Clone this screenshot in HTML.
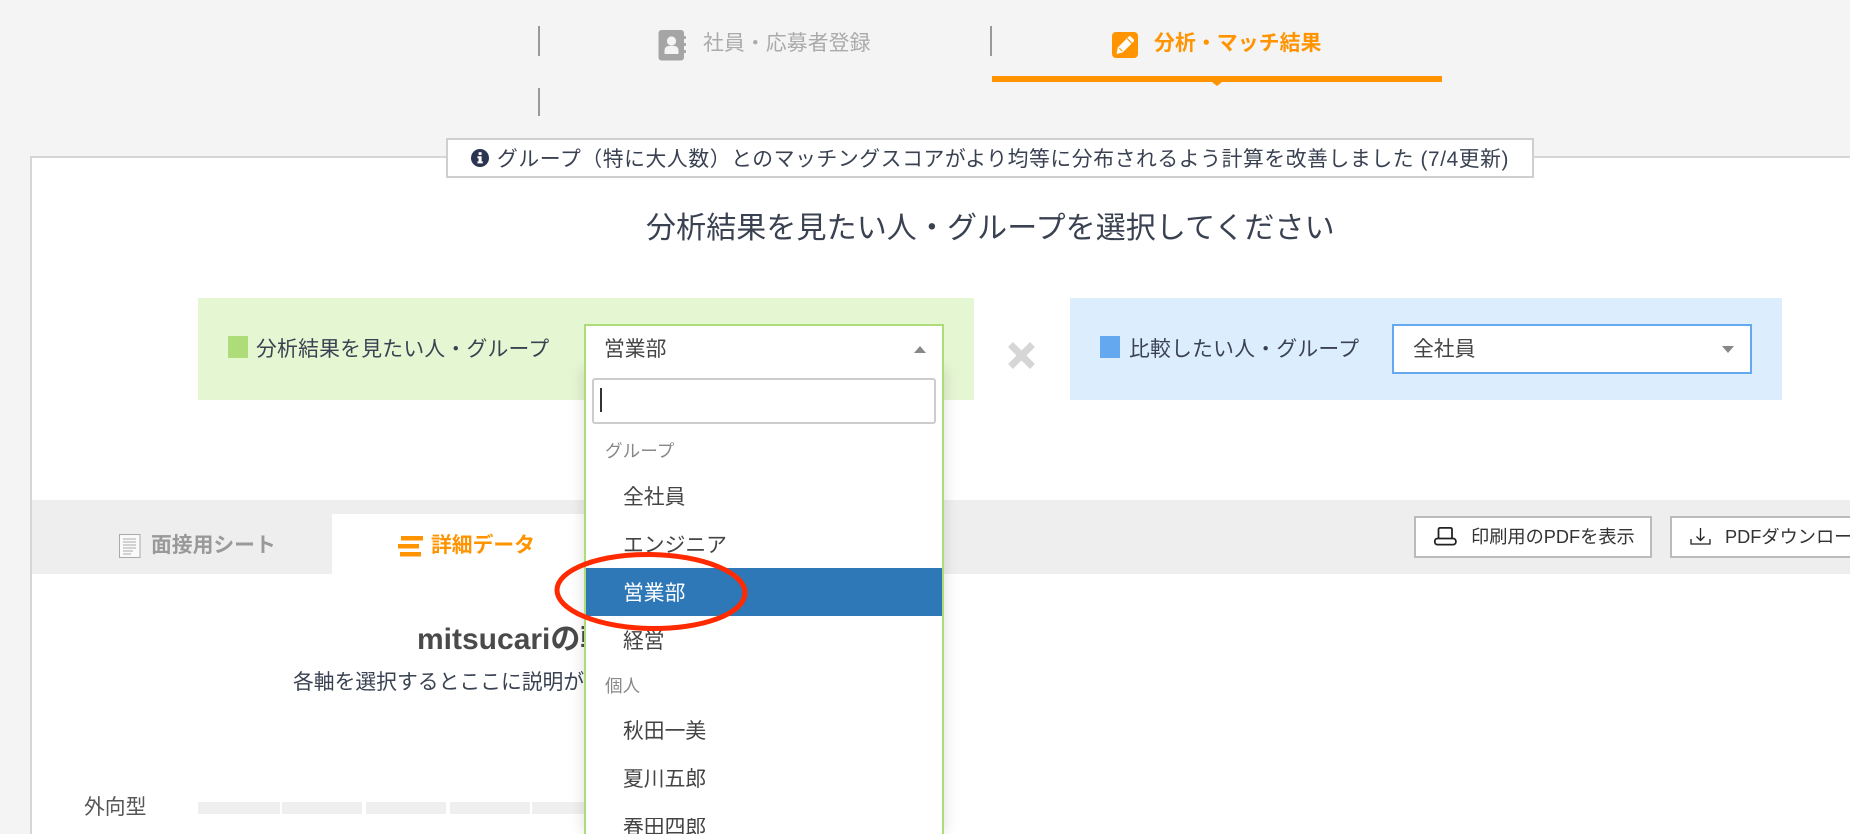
<!DOCTYPE html>
<html lang="ja">
<head>
<meta charset="utf-8">
<title>分析・マッチ結果</title>
<style>
html,body{margin:0;padding:0;width:1850px;height:834px;overflow:hidden;background:#f4f4f4;}
#w{position:absolute;left:0;top:0;width:1850px;height:834px;overflow:hidden;background:#f4f4f4;
font-family:"Liberation Sans","Noto Sans CJK JP",sans-serif;color:#3a4252;}
.a{position:absolute;box-sizing:border-box;}
.t{position:absolute;white-space:nowrap;line-height:1;font-size:20.8px;}
svg{position:absolute;overflow:visible;}
</style>
</head>
<body>
<div id="w">
<!-- top nav -->
<div class="a" style="left:538px;top:26px;width:2px;height:30px;background:#999"></div>
<div class="a" style="left:990px;top:26px;width:2px;height:30px;background:#999"></div>
<div class="a" style="left:538px;top:88px;width:2px;height:28px;background:#999"></div>
<div class="a" style="left:992px;top:76px;width:450px;height:6px;background:#ff9400"></div>
<svg style="left:1212px;top:82px" width="10" height="4"><path d="M0 0H10L5 4Z" fill="#ff9400"/></svg>

<svg style="left:658px;top:30px" width="30" height="31" viewBox="0 0 30 31">
<rect x="0.5" y="0" width="25.5" height="30.5" rx="3" fill="#a5a5a5"/>
<rect x="25.5" y="6" width="2.5" height="3" rx="1" fill="#a5a5a5"/>
<rect x="25.5" y="13" width="2.5" height="3" rx="1" fill="#a5a5a5"/>
<rect x="25.5" y="20" width="2.5" height="3" rx="1" fill="#a5a5a5"/>
<circle cx="13.5" cy="11" r="4.6" fill="#f4f4f4"/>
<path d="M6.5 24V20.5C6.5 17.5 9 16 10.5 16H16.5C18.5 16 20.5 17.5 20.5 20.5V24Z" fill="#f4f4f4"/>
</svg>
<div class="t" style="left:703px;top:34px;color:#aaa;letter-spacing:.15px">社員・応募者登録</div>

<svg style="left:1112px;top:32px" width="26" height="26" viewBox="0 0 26 26">
<rect width="26" height="26" rx="4" fill="#ff9400"/>
<path d="M4.5 22L5.8 15.5L16.5 4.8C17.3 4 18.3 4 19 4.7L21.5 7.2C22.2 7.9 22.2 8.9 21.4 9.7L10.7 20.4Z" fill="#fff"/>
<path d="M15.2 6.6L19.8 11.2" stroke="#ff9400" stroke-width="1.2"/>
<path d="M7.2 16L10.3 19.1" stroke="#ff9400" stroke-width="1"/>
</svg>
<div class="t" style="left:1154px;top:34px;color:#ff9400;font-weight:700;letter-spacing:.15px">分析・マッチ結果</div>

<!-- main panel -->
<div class="a" style="left:30px;top:156px;width:1820px;height:678px;background:#fff;border:2px solid #d6d6d6;border-right:0;border-bottom:0"></div>

<!-- notice -->
<div class="a" style="left:446px;top:138px;width:1088px;height:40px;background:#fff;border:2px solid #cfcfcf"></div>
<svg style="left:471px;top:149px" width="18" height="18" viewBox="0 0 18 18">
<circle cx="9" cy="9" r="9" fill="#2b3450"/>
<rect x="7.6" y="3.2" width="3" height="2.8" fill="#fff"/>
<path d="M6.4 7.2H10.6V12.4H11.8V14.4H6.4V12.4H7.6V9.2H6.4Z" fill="#fff"/>
</svg>
<div class="t" style="left:497px;top:150px;letter-spacing:.6px">グループ（特に大人数）とのマッチングスコアがより均等に分布されるよう計算を改善しました (7/4更新)</div>

<div class="t" style="left:646px;top:214px;font-size:30px;letter-spacing:.1px">分析結果を見たい人・グループを選択してください</div>

<!-- green area -->
<div class="a" style="left:198px;top:298px;width:776px;height:102px;background:#e5f6d3"></div>
<div class="a" style="left:228px;top:336px;width:20px;height:22px;background:#addc78"></div>
<div class="t" style="left:256px;top:340px;letter-spacing:.25px">分析結果を見たい人・グループ</div>

<!-- X -->
<svg style="left:1006px;top:341px" width="31" height="29" viewBox="0 0 31 29">
<path d="M4.5 3.5L26.5 25.5M26.5 3.5L4.5 25.5" stroke="#d6d6d6" stroke-width="7" fill="none"/>
</svg>

<!-- blue area -->
<div class="a" style="left:1070px;top:298px;width:712px;height:102px;background:#dcedfd"></div>
<div class="a" style="left:1100px;top:336px;width:20px;height:22px;background:#64a8f0"></div>
<div class="t" style="left:1129px;top:340px;letter-spacing:.25px">比較したい人・グループ</div>
<div class="a" style="left:1392px;top:324px;width:360px;height:50px;background:#fff;border:2px solid #64a8f0"></div>
<div class="t" style="left:1413px;top:340px;color:#444">全社員</div>
<svg style="left:1722px;top:346px" width="12" height="7"><path d="M0 0H12L6 7Z" fill="#888"/></svg>

<!-- tabs band -->
<div class="a" style="left:32px;top:500px;width:1818px;height:74px;background:#eee"></div>
<div class="a" style="left:332px;top:514px;width:300px;height:60px;background:#fff"></div>
<svg style="left:119px;top:534px" width="22" height="24" viewBox="0 0 22 24">
<rect x="0.5" y="0.5" width="20.5" height="23" fill="#fafafa" stroke="#aaa"/>
<path d="M4 5H17M4 8H17M4 11H17M4 14H17M4 17H14M4 20H12" stroke="#aaa" stroke-width="1"/>
</svg>
<div class="t" style="left:151px;top:536px;color:#999;font-weight:700">面接用シート</div>
<svg style="left:398px;top:536px" width="26" height="22" viewBox="0 0 26 22">
<path d="M3 0H25V4.5H3ZM0 8H21V12.5H0ZM2 16H23V20.5H2Z" fill="#ff9400"/>
</svg>
<div class="t" style="left:431px;top:536px;color:#ff9400;font-weight:700">詳細データ</div>

<!-- buttons -->
<div class="a" style="left:1414px;top:516px;width:238px;height:42px;background:#fff;border:2px solid #bbb"></div>
<svg style="left:1434px;top:527px" width="23" height="19" viewBox="0 0 23 19" fill="none" stroke="#222" stroke-width="1.8">
<path d="M4.5 12V2.5C4.5 1.4 5.2 .9 6.2 .9H16.2C17.2 .9 18 1.4 18 2.5V12"/>
<path d="M3.5 11.5H19C20.8 11.5 21.9 12.8 21.9 14.6C21.9 16.4 20.8 17.6 19 17.6H3.5C1.8 17.6 .8 16.4 .8 14.6C.8 12.8 1.8 11.5 3.5 11.5Z"/>
</svg>
<div class="t" style="left:1471px;top:528px;font-size:18.2px;color:#333">印刷用のPDFを表示</div>
<div class="a" style="left:1670px;top:516px;width:180px;height:42px;background:#fff;border:2px solid #bbb;border-right:0"></div>
<svg style="left:1690px;top:528px" width="21" height="17" viewBox="0 0 21 17" fill="none" stroke="#222" stroke-width="1.3">
<path d="M1 11V16H20V11"/>
<path d="M10.5 0V12M6.5 8.5L10.5 12.5L14.5 8.5"/>
</svg>
<div class="t" style="left:1725px;top:528px;width:125px;overflow:hidden;font-size:18.2px;color:#333">PDFダウンロード</div>

<!-- content behind dropdown -->
<div class="t" style="left:417px;top:625px;font-size:30px;font-weight:700;color:#4a4a4a">mitsucariの軸について</div>
<div class="t" style="left:293px;top:673px">各軸を選択するとここに説明が表示されます</div>
<div class="t" style="left:84px;top:798px;color:#555">外向型</div>
<div class="a" style="left:198px;top:802px;width:82px;height:12px;background:#efefef"></div>
<div class="a" style="left:282px;top:802px;width:80px;height:12px;background:#efefef"></div>
<div class="a" style="left:366px;top:802px;width:80px;height:12px;background:#efefef"></div>
<div class="a" style="left:450px;top:802px;width:80px;height:12px;background:#efefef"></div>
<div class="a" style="left:532px;top:802px;width:80px;height:12px;background:#efefef"></div>

<!-- green select + dropdown -->
<div class="a" style="left:584px;top:368px;width:360px;height:466px;background:#fff;box-shadow:0 0 14px rgba(0,0,0,.14)"></div>
<div class="a" style="left:584px;top:324px;width:360px;height:510px;background:#fff;border:2px solid #addc78;border-bottom:0"></div>
<div class="t" style="left:604px;top:340px;color:#444">営業部</div>
<svg style="left:914px;top:346px" width="12" height="7"><path d="M0 7H12L6 0Z" fill="#888"/></svg>
<div class="a" style="left:592px;top:378px;width:344px;height:46px;background:#fff;border:2px solid #ccc;border-radius:3px"></div>
<div class="a" style="left:600px;top:388px;width:2px;height:24px;background:#333"></div>
<div class="t" style="left:605px;top:443px;font-size:17.6px;color:#888">グループ</div>
<div class="t" style="left:623px;top:488px;color:#444">全社員</div>
<div class="t" style="left:623px;top:536px;color:#444">エンジニア</div>
<div class="a" style="left:586px;top:568px;width:356px;height:48px;background:#2f78b7"></div>
<div class="t" style="left:623px;top:584px;color:#fff">営業部</div>
<div class="t" style="left:623px;top:632px;color:#444">経営</div>
<div class="t" style="left:605px;top:678px;font-size:17.6px;color:#888">個人</div>
<div class="t" style="left:623px;top:722px;color:#444">秋田一美</div>
<div class="t" style="left:623px;top:770px;color:#444">夏川五郎</div>
<div class="t" style="left:623px;top:818px;height:16px;overflow:hidden;color:#444">春田四郎</div>

<!-- red annotation -->
<svg style="left:550px;top:548px" width="204" height="88" viewBox="0 0 204 88">
<ellipse cx="101" cy="43.5" rx="94" ry="37" fill="none" stroke="#ff2a00" stroke-width="5" transform="rotate(1 101 43.5)"/>
</svg>
</div>
</body>
</html>
